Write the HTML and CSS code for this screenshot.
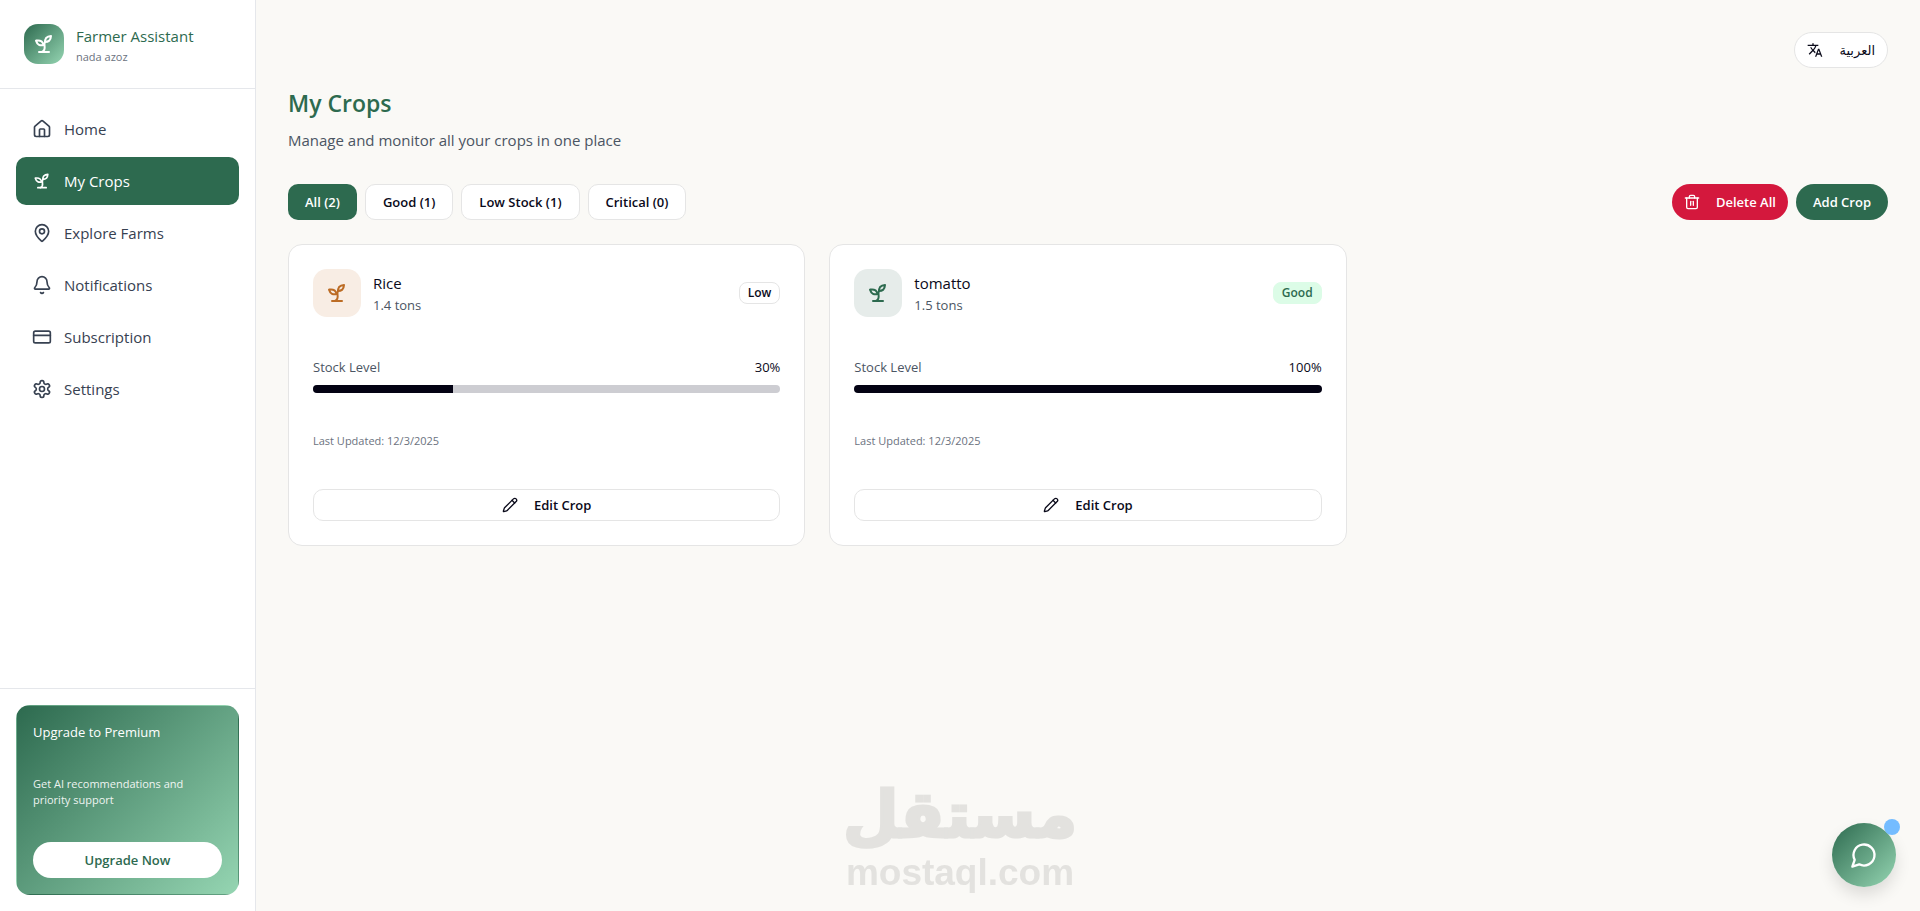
FILE: index.html
```html
<!DOCTYPE html>
<html lang="en">
<head>
  <meta charset="UTF-8">
  <meta name="viewport" content="width=device-width, initial-scale=1.0">
  <title>Farmer Assistant - My Crops</title>
  <link rel="stylesheet" href="styles.css">
</head>
<body>
  <!-- Shared icons -->
  <svg class="sprite" aria-hidden="true">
    <symbol id="icon-sprout" viewBox="0 0 24 24">
      <path d="M7 20h10"/>
      <path d="M10 20c5.5-2.5.8-6.4 3-10"/>
      <path d="M9.500 9.400c1.100.8 1.800 2.200 2.300 3.700-2 .4-3.500.4-4.800-.3-1.200-.6-2.300-1.900-3-4.200 2.800-.5 4.400 0 5.500.8z"/>
      <path d="M14.100 6a7 7 0 0 0-1.100 4c1.900-.1 3.300-.6 4.300-1.400 1-1 1.600-2.300 1.700-4.600-2.700.1-4 1-4.900 2z"/>
    </symbol>
    <symbol id="icon-pencil" viewBox="0 0 24 24">
      <path d="M21.174 6.812a1 1 0 0 0-3.986-3.987L3.842 16.174a2 2 0 0 0-.5.830l-1.321 4.352a.5.5 0 0 0 .623.622l4.353-1.320a2 2 0 0 0 .830-.497z"/>
      <path d="m15 5 4 4"/>
    </symbol>
  </svg>

  <div class="layout">
    <aside class="sidebar">
      <div class="brand">
        <div class="brand-logo">
          <svg class="icon icon-md icon-brand"><use href="#icon-sprout"/></svg>
        </div>
        <div>
          <div class="brand-name">Farmer Assistant</div>
          <div class="brand-user">nada azoz</div>
        </div>
      </div>

      <nav class="nav">
        <a href="#home" class="nav-link">
          <svg class="icon icon-md" viewBox="0 0 24 24">
            <path d="M15 21v-8a1 1 0 0 0-1-1h-4a1 1 0 0 0-1 1v8"/>
            <path d="M3 10a2 2 0 0 1 .709-1.528l7-5.999a2 2 0 0 1 2.582 0l7 5.999A2 2 0 0 1 21 10v9a2 2 0 0 1-2 2H5a2 2 0 0 1-2-2z"/>
          </svg>
          Home
        </a>
        <a href="#crops" class="nav-link active">
          <svg class="icon icon-md"><use href="#icon-sprout"/></svg>
          My Crops
        </a>
        <a href="#farms" class="nav-link">
          <svg class="icon icon-md" viewBox="0 0 24 24">
            <path d="M20 10c0 4.993-5.539 10.193-7.399 11.799a1 1 0 0 1-1.202 0C9.539 20.193 4 14.993 4 10a8 8 0 0 1 16 0"/>
            <circle cx="12" cy="10" r="3"/>
          </svg>
          Explore Farms
        </a>
        <a href="#notifications" class="nav-link">
          <svg class="icon icon-md" viewBox="0 0 24 24">
            <path d="M10.268 21a2 2 0 0 0 3.464 0"/>
            <path d="M3.262 15.326A1 1 0 0 0 4 17h16a1 1 0 0 0 .740-1.673C19.410 13.956 18 12.499 18 8A6 6 0 0 0 6 8c0 4.499-1.411 5.956-2.738 7.326"/>
          </svg>
          Notifications
        </a>
        <a href="#subscription" class="nav-link">
          <svg class="icon icon-md" viewBox="0 0 24 24">
            <rect width="20" height="14" x="2" y="5" rx="2"/>
            <path d="M2 10h20"/>
          </svg>
          Subscription
        </a>
        <a href="#settings" class="nav-link">
          <svg class="icon icon-md" viewBox="0 0 24 24">
            <path d="M12.220 2h-.440a2 2 0 0 0-2 2v.180a2 2 0 0 1-1 1.730l-.430.250a2 2 0 0 1-2 0l-.150-.080a2 2 0 0 0-2.730.730l-.220.380a2 2 0 0 0 .730 2.730l.150.100a2 2 0 0 1 1 1.720v.510a2 2 0 0 1-1 1.740l-.150.090a2 2 0 0 0-.730 2.730l.220.380a2 2 0 0 0 2.730.730l.150-.080a2 2 0 0 1 2 0l.430.250a2 2 0 0 1 1 1.730V20a2 2 0 0 0 2 2h.440a2 2 0 0 0 2-2v-.180a2 2 0 0 1 1-1.730l.430-.250a2 2 0 0 1 2 0l.150.080a2 2 0 0 0 2.730-.730l.220-.390a2 2 0 0 0-.730-2.730l-.150-.080a2 2 0 0 1-1-1.740v-.500a2 2 0 0 1 1-1.740l.150-.090a2 2 0 0 0 .730-2.730l-.220-.380a2 2 0 0 0-2.730-.730l-.150.080a2 2 0 0 1-2 0l-.430-.250a2 2 0 0 1-1-1.730V4a2 2 0 0 0-2-2z"/>
            <circle cx="12" cy="12" r="3"/>
          </svg>
          Settings
        </a>
      </nav>

      <div class="sidebar-footer">
        <div class="premium">
          <div class="premium-title">Upgrade to Premium</div>
          <p class="premium-text">Get AI recommendations and priority support</p>
          <button class="btn btn-light">Upgrade Now</button>
        </div>
      </div>
    </aside>

    <main class="main">
      <div class="topbar">
        <button class="btn btn-outline btn-pill btn-icon btn-lang" lang="ar">
          <svg class="icon icon-sm icon-solid" viewBox="0 0 24 24">
            <path d="m12.870 15.070-2.540-2.510.030-.030A17.520 17.520 0 0 0 14.070 6H17V4h-7V2H8v2H1v2h11.170C11.500 7.920 10.440 9.750 9 11.350 8.070 10.320 7.300 9.190 6.690 8h-2c.730 1.630 1.730 3.170 2.980 4.560l-5.090 5.020L4 19l5-5 3.110 3.110zM18.500 10h-2L12 22h2l1.120-3h4.750L21 22h2zm-2.620 7 1.620-4.330L19.120 17z"/>
          </svg>
          العربية
        </button>
      </div>

      <h1>My Crops</h1>
      <p class="subtitle">Manage and monitor all your crops in one place</p>

      <div class="toolbar">
        <div class="btn-group">
          <button class="btn btn-primary">All (2)</button>
          <button class="btn btn-outline">Good (1)</button>
          <button class="btn btn-outline">Low Stock (1)</button>
          <button class="btn btn-outline">Critical (0)</button>
        </div>
        <div class="btn-group">
          <button class="btn btn-danger btn-pill btn-icon">
            <svg class="icon icon-sm" viewBox="0 0 24 24">
              <path d="M2 6h20"/>
              <path d="M20 6v14a2 2 0 0 1-2 2H6a2 2 0 0 1-2-2V6"/>
              <path d="M8 6V4a2 2 0 0 1 2-2h4a2 2 0 0 1 2 2v2"/>
              <path d="M10 11v6"/>
              <path d="M14 11v6"/>
            </svg>
            Delete All
          </button>
          <button class="btn btn-primary btn-pill">Add Crop</button>
        </div>
      </div>

      <!-- Crop cards -->
      <div class="crops">
        <div class="card">
          <div class="card-header">
            <div class="crop-icon low">
              <svg class="icon icon-crop"><use href="#icon-sprout"/></svg>
            </div>
            <div class="crop-info">
              <div class="crop-name">Rice</div>
              <div class="crop-amount">1.4 tons</div>
            </div>
            <span class="badge">Low</span>
          </div>
          <div class="stock">
            <div class="stock-row">
              <span class="stock-label">Stock Level</span>
              <span>30%</span>
            </div>
            <div class="progress"><div class="progress-bar" style="width: 30%"></div></div>
          </div>
          <div class="updated">Last Updated: 12/3/2025</div>
          <button class="btn btn-outline btn-edit">
            <svg class="icon icon-sm"><use href="#icon-pencil"/></svg>
            Edit Crop
          </button>
        </div>

        <div class="card">
          <div class="card-header">
            <div class="crop-icon good">
              <svg class="icon icon-crop"><use href="#icon-sprout"/></svg>
            </div>
            <div class="crop-info">
              <div class="crop-name">tomatto</div>
              <div class="crop-amount">1.5 tons</div>
            </div>
            <span class="badge badge-good">Good</span>
          </div>
          <div class="stock">
            <div class="stock-row">
              <span class="stock-label">Stock Level</span>
              <span>100%</span>
            </div>
            <div class="progress"><div class="progress-bar" style="width: 100%"></div></div>
          </div>
          <div class="updated">Last Updated: 12/3/2025</div>
          <button class="btn btn-outline btn-edit">
            <svg class="icon icon-sm"><use href="#icon-pencil"/></svg>
            Edit Crop
          </button>
        </div>
      </div>
    </main>
  </div>

  <div class="watermark">
    <span class="watermark-ar" lang="ar">مستقل</span>
    <span class="watermark-en">mostaql.com</span>
  </div>

  <button class="chat-btn" aria-label="Open chat">
    <svg class="icon icon-lg" viewBox="0 0 24 24">
      <path d="M7.900 20A9 9 0 1 0 4 16.100L2 22Z"/>
    </svg>
    <span class="chat-dot"></span>
  </button>
</body>
</html>
```

FILE: styles.css
```css
* {
  box-sizing: border-box;
}

body {
  margin: 0;
  font-family: "Open Sans", "Noto Sans", "DejaVu Sans", sans-serif;
  font-size: 13px;
  line-height: 20px;
  background-color: #faf9f6;
  color: #0a0a1a;
}

h1, p {
  margin: 0;
}

/* Icons */
.sprite {
  display: none;
}

.icon {
  flex-shrink: 0;
  fill: none;
  stroke: currentColor;
  stroke-width: 2;
  stroke-linecap: round;
  stroke-linejoin: round;
}

.icon-sm {
  width: 16px;
  height: 16px;
}

.icon-md {
  width: 20px;
  height: 20px;
}

.icon-brand,
.icon-crop {
  width: 24px;
  height: 24px;
}

.icon-lg {
  width: 28px;
  height: 28px;
}

.icon-solid {
  fill: currentColor;
  stroke: none;
}

/* Layout */
.layout {
  display: flex;
  min-height: 100vh;
}

.sidebar {
  display: flex;
  flex-direction: column;
  flex-shrink: 0;
  width: 256px;
  background: #fff;
  border-right: 1px solid #e5e7eb;
}

.main {
  flex: 1;
  padding: 32px;
}

/* Sidebar */
.brand {
  display: flex;
  gap: 12px;
  height: 89px;
  padding: 24px;
  border-bottom: 1px solid #e5e7eb;
}

.brand-logo {
  display: flex;
  align-items: center;
  justify-content: center;
  width: 40px;
  height: 40px;
  border-radius: 14px;
  background: linear-gradient(135deg, #2d6a4f, #95d5b2);
  color: #fff;
}

.brand-name {
  font-size: 15px;
  line-height: 24px;
  color: #2d6a4f;
}

.brand-user {
  font-size: 11px;
  line-height: 18px;
  color: #6b7280;
}

.nav {
  display: flex;
  flex: 1;
  flex-direction: column;
  gap: 4px;
  padding: 16px;
}

.nav-link {
  display: flex;
  align-items: center;
  gap: 12px;
  height: 48px;
  padding: 0 16px;
  border-radius: 10px;
  font-size: 15px;
  color: #374151;
  text-decoration: none;
}

.nav-link.active {
  background: #2d6a4f;
  color: #fff;
}

.sidebar-footer {
  padding: 16px;
  border-top: 1px solid #e5e7eb;
}

.premium {
  display: flex;
  flex-direction: column;
  gap: 34px;
  padding: 16px;
  border: 1px solid transparent;
  border-radius: 14px;
  background: linear-gradient(135deg, #2d6a4f, #95d5b2);
  color: #fff;
}

.premium-text {
  font-size: 11px;
  line-height: 16px;
  opacity: 0.9;
}

/* Buttons */
.btn {
  display: flex;
  align-items: center;
  justify-content: center;
  height: 36px;
  padding: 0 17px;
  border: none;
  border-radius: 10px;
  font-family: inherit;
  font-size: 13px;
  font-weight: 600;
  line-height: 20px;
  cursor: pointer;
}

.btn-group {
  display: flex;
  gap: 8px;
}

.btn-primary {
  background: #2d6a4f;
  color: #fff;
}

.btn-danger {
  background: #d4183d;
  color: #fff;
}

.btn-outline {
  background: #fff;
  border: 1px solid #e5e5e5;
  color: #0a0a1a;
}

.btn-light {
  border-radius: 18px;
  background: #fff;
  color: #2d6a4f;
}

.btn-pill {
  border-radius: 18px;
}

.btn-icon {
  gap: 16px;
  padding: 0 12px;
}

.btn-lang {
  font-weight: 500;
}

.btn-edit {
  gap: 16px;
  height: 32px;
}

/* Page header */
.topbar {
  display: flex;
  justify-content: flex-end;
  margin-bottom: 20px;
}

h1 {
  font-size: 23px;
  font-weight: 600;
  line-height: 30px;
  color: #2d6a4f;
}

.subtitle {
  margin-top: 10px;
  font-size: 15px;
  line-height: 24px;
  color: #4b5563;
}

.toolbar {
  display: flex;
  justify-content: space-between;
  margin: 32px 0 24px;
}

/* Crop cards */
.crops {
  display: grid;
  grid-template-columns: repeat(3, 1fr);
  gap: 24px;
}

.card {
  display: flex;
  flex-direction: column;
  gap: 40px;
  padding: 24px;
  background: #fff;
  border: 1px solid #e5e5e5;
  border-radius: 14px;
}

.card-header {
  display: flex;
  align-items: center;
  gap: 12px;
}

.crop-icon {
  display: flex;
  align-items: center;
  justify-content: center;
  width: 48px;
  height: 48px;
  border-radius: 14px;
}

.crop-icon.low {
  background: #f8ede4;
  color: #bc6c25;
}

.crop-icon.good {
  background: #e6ecea;
  color: #2d6a4f;
}

.crop-info {
  flex: 1;
}

.crop-name {
  font-size: 15px;
  line-height: 24px;
}

.crop-amount {
  color: #4b5563;
}

.badge {
  padding: 2px 8px;
  border: 1px solid #e5e5e5;
  border-radius: 8px;
  font-size: 12px;
  font-weight: 600;
  line-height: 16px;
}

.badge-good {
  border-color: #dcfce7;
  background: #dcfce7;
  color: #2d6a4f;
}

.stock-row {
  display: flex;
  justify-content: space-between;
  margin-bottom: 8px;
}

.stock-label {
  color: #4b5563;
}

.progress {
  height: 8px;
  border-radius: 4px;
  background: #cdcdd2;
  overflow: hidden;
}

.progress-bar {
  height: 100%;
  background: #030213;
}

.updated {
  font-size: 11px;
  line-height: 16px;
  color: #6b7280;
}

/* Watermark */
.watermark {
  position: fixed;
  bottom: 18px;
  left: 50%;
  display: flex;
  flex-direction: column;
  align-items: center;
  transform: translateX(-50%);
  color: #e3e2df;
  font-weight: 700;
  pointer-events: none;
}

.watermark-ar {
  font-family: "DejaVu Sans", sans-serif;
  font-size: 64px;
  line-height: 76px;
  -webkit-text-stroke: 3px #e3e2df;
}

.watermark-en {
  font-family: "Liberation Sans", Arial, sans-serif;
  font-size: 37px;
  line-height: 40px;
}

/* Chat button */
.chat-btn {
  position: fixed;
  right: 24px;
  bottom: 24px;
  display: flex;
  align-items: center;
  justify-content: center;
  width: 64px;
  height: 64px;
  padding: 0;
  border: none;
  border-radius: 50%;
  background: linear-gradient(135deg, #2d6a4f, #95d5b2);
  box-shadow: 0 8px 16px rgba(0, 0, 0, 0.12);
  color: #fff;
  cursor: pointer;
}

.chat-dot {
  position: absolute;
  top: -4px;
  right: -4px;
  width: 16px;
  height: 16px;
  border-radius: 50%;
  background: #74bcff;
}

/* Responsive Design */
@media (max-width: 1100px) {
  .crops {
    grid-template-columns: 1fr;
  }

  .toolbar {
    flex-wrap: wrap;
    gap: 12px;
  }
}
```
